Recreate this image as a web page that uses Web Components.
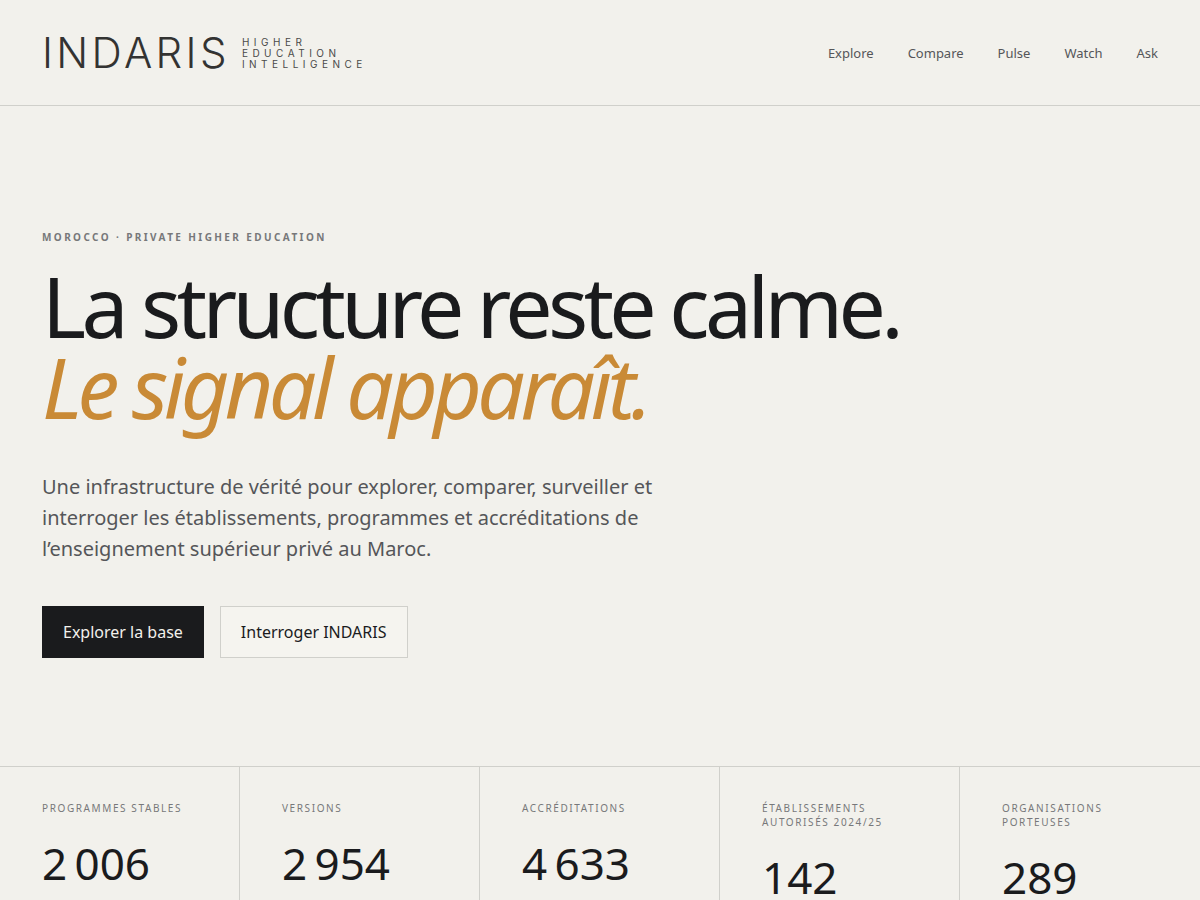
<!DOCTYPE html>
<html lang="fr">
<head>
<meta charset="utf-8">
<meta name="viewport" content="width=device-width, initial-scale=1">
<title>INDARIS</title>
<style>
  :root {
    --paper: #f2f1ec;
    --ink: #1a1b1d;
    --muted: #555659;
    --soft: #77787a;
    --line: #d0d0cb;
    --signal: #c98a36;
    --gutter: 42px;
  }
  body { margin: 0; background: var(--paper); color: var(--ink); font-family: "Noto Sans", sans-serif; }
</style>
</head>
<body>
<indaris-app></indaris-app>
<script>
const define = (name, html) => customElements.define(name, class extends HTMLElement {
  constructor() {
    super();
    const template = document.createElement('template');
    template.innerHTML = html;
    this.attachShadow({ mode: 'open' }).append(template.content.cloneNode(true));
  }
});

define('indaris-logo', `
  <style>
    :host { display: block; }
    a { display: flex; align-items: center; gap: 12px; padding-top: 2px; color: #333332; text-decoration: none; font-family: Inter, sans-serif; }
    .name { font-size: 42px; line-height: 34px; font-weight: 300; letter-spacing: 0.08em; }
    .tag { color: #4a4a48; font-size: 10px; line-height: 11px; letter-spacing: 0.45em; }
    .tag span { display: block; }
  </style>
  <a href="#">
    <span class="name">INDARIS</span>
    <span class="tag"><span>HIGHER</span><span>EDUCATION</span><span>INTELLIGENCE</span></span>
  </a>`);

define('nav-link', `
  <style>
    :host { display: block; }
    a { color: var(--muted); text-decoration: none; font-size: 13px; line-height: 18px; }
  </style>
  <a href="#"><slot></slot></a>`);

define('site-header', `
  <style>
    :host { display: block; border-bottom: 1px solid var(--line); }
    header { display: flex; align-items: center; justify-content: space-between; padding: 34px var(--gutter) 35px; }
    nav { display: flex; gap: 34px; }
  </style>
  <header>
    <indaris-logo></indaris-logo>
    <nav aria-label="Navigation principale">
      <nav-link>Explore</nav-link><nav-link>Compare</nav-link><nav-link>Pulse</nav-link><nav-link>Watch</nav-link><nav-link>Ask</nav-link>
    </nav>
  </header>`);

define('action-button', `
  <style>
    :host { display: block; }
    button { display: block; box-sizing: border-box; margin: 0; padding: 14px 20px; border: 1px solid var(--line);
      border-radius: 0; background: #f5f4ef; color: var(--ink); font: 16px/22px "Noto Sans", sans-serif; cursor: pointer; }
    :host([primary]) button { background: var(--ink); border-color: var(--ink); color: var(--paper); }
  </style>
  <button type="button"><slot></slot></button>`);

define('hero-section', `
  <style>
    :host { display: block; }
    section { padding: 124px var(--gutter) 108px; }
    .eyebrow { margin: 0 0 21px; color: var(--soft); font-size: 10px; line-height: 14px; font-weight: 700; letter-spacing: 0.24em; }
    h1 { margin: 0 0 44px; font-size: 84px; line-height: 81px; font-weight: 400; letter-spacing: -0.055em; }
    h1 em { display: block; color: var(--signal); }
    .lead { margin: 0 0 42px; max-width: 640px; color: var(--muted); font-size: 20px; line-height: 31px; }
    .actions { display: flex; flex-wrap: wrap; gap: 16px; }
  </style>
  <section>
    <p class="eyebrow">MOROCCO · PRIVATE HIGHER EDUCATION</p>
    <h1>La structure reste calme. <em>Le signal apparaît.</em></h1>
    <p class="lead">Une infrastructure de vérité pour explorer, comparer, surveiller et interroger les établissements, programmes et accréditations de l’enseignement supérieur privé au Maroc.</p>
    <div class="actions">
      <action-button primary>Explorer la base</action-button>
      <action-button>Interroger INDARIS</action-button>
    </div>
  </section>`);

define('stat-cell', `
  <style>
    :host { display: block; padding: 34px var(--gutter); border-right: 1px solid var(--line); }
    :host(:last-child) { border-right: 0; }
    .label { color: var(--soft); font-size: 10px; line-height: 14px; letter-spacing: 0.16em; margin-bottom: 26px; }
    .value { font-size: 44px; line-height: 44px; }
  </style>
  <div class="label"><slot name="label"></slot></div>
  <div class="value"><slot></slot></div>`);

define('stats-band', `
  <style>
    :host { display: block; border-top: 1px solid var(--line); }
    section { display: grid; grid-template-columns: repeat(5, 1fr); }
  </style>
  <section aria-label="Chiffres clés">
    <stat-cell><span slot="label">PROGRAMMES STABLES</span>2&#8239;006</stat-cell>
    <stat-cell><span slot="label">VERSIONS</span>2&#8239;954</stat-cell>
    <stat-cell><span slot="label">ACCRÉDITATIONS</span>4&#8239;633</stat-cell>
    <stat-cell><span slot="label">ÉTABLISSEMENTS AUTORISÉS 2024/25</span>142</stat-cell>
    <stat-cell><span slot="label">ORGANISATIONS PORTEUSES</span>289</stat-cell>
  </section>`);

define('indaris-app', `
  <style>:host, main { display: block; }</style>
  <site-header></site-header>
  <main>
    <hero-section></hero-section>
    <stats-band></stats-band>
  </main>`);
</script>
</body>
</html>
